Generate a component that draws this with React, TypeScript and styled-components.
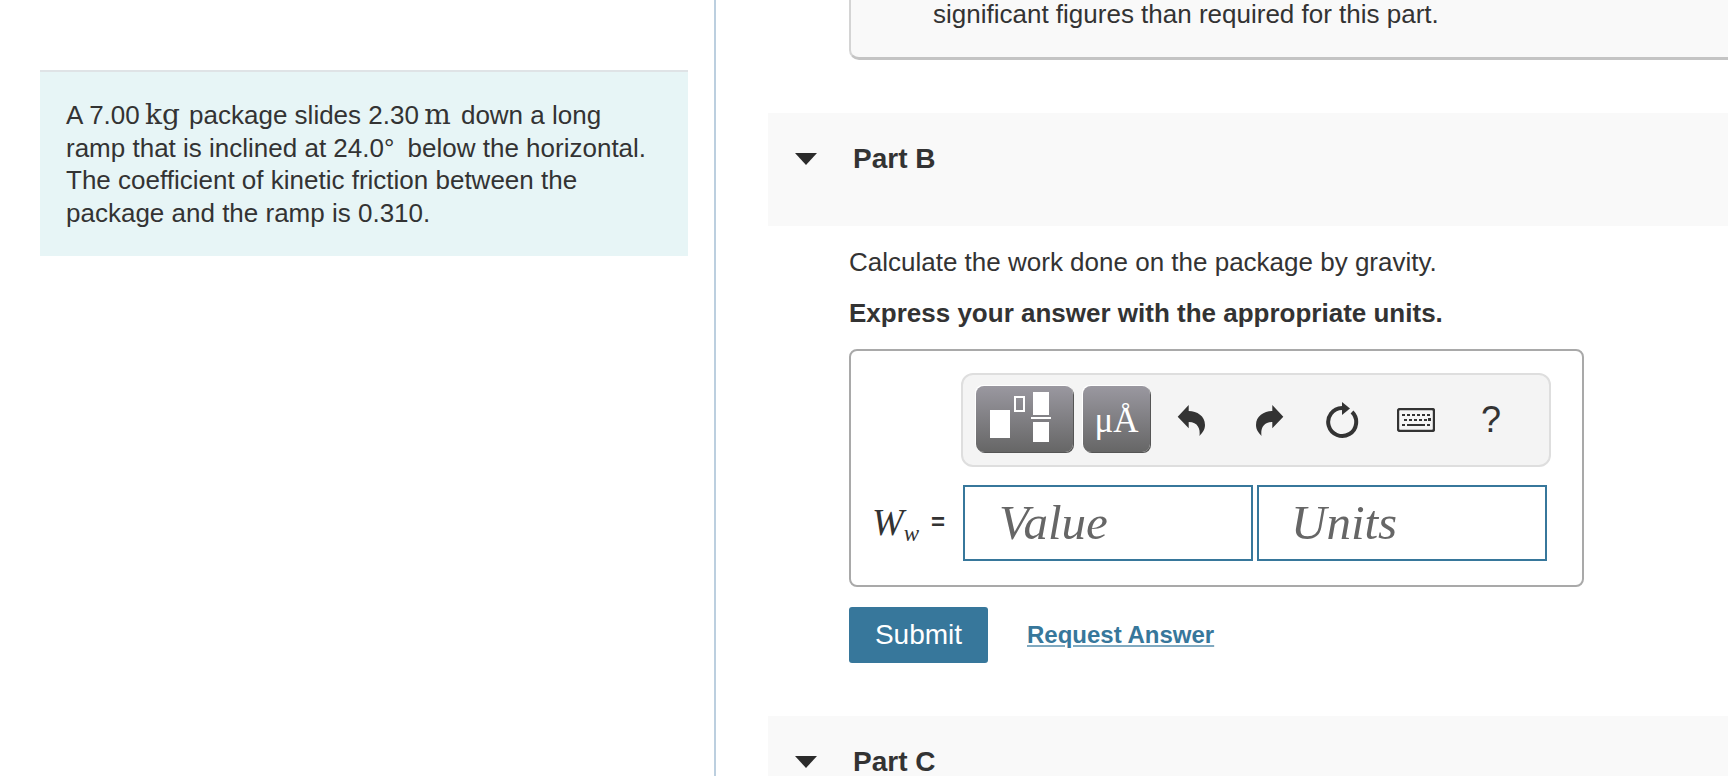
import styled, { createGlobalStyle } from 'styled-components';

const GlobalStyle = createGlobalStyle`
	html, body {
		margin: 0;
		padding: 0;
		background: #fff;
		overflow: hidden;
	}
	body {
		font-family: "Liberation Sans", Arial, sans-serif;
		color: #333;
	}
`;

const UndoIcon = ({ flip }: { flip?: boolean }) => (
	<ArrowSvg viewBox="0 0 28 31" $flip={flip}>
		<path d="M0.7 11.7 L11.7 0 V6 C20 6 28 11 28 20 C28 25 25 28 22.5 31 C23.5 24 21 17 11.7 17 V23.3 Z" fill="#333" />
	</ArrowSvg>
);

const RefreshIcon = () => (
	<svg width="36" height="38" viewBox="0 0 36 38">
		<path d="M18 7 A14 14 0 1 0 28 11" fill="none" stroke="#333" strokeWidth="4" />
		<polygon points="18,1 18,14 26,7.5" fill="#333" />
	</svg>
);

const KeyboardIcon = () => (
	<svg width="38" height="24" viewBox="0 0 38 24">
		<rect x="1" y="1" width="36" height="22" rx="2" fill="#f4f4f4" stroke="#333" strokeWidth="2.4" />
		{[5, 10, 15, 20, 25, 30].map((x) => (
			<rect key={x} x={x} y="6" width="3" height="2" fill="#333" />
		))}
		{[7, 12, 17, 22, 27].map((x) => (
			<rect key={x} x={x} y="11" width="3" height="2" fill="#333" />
		))}
		<rect x="31" y="10" width="3" height="3" fill="#333" />
		<rect x="5" y="16" width="3" height="2" fill="#333" />
		<rect x="10" y="16" width="18" height="2" fill="#333" />
		<rect x="30" y="16" width="3" height="2" fill="#333" />
	</svg>
);

const TemplatesIcon = () => (
	<svg width="97" height="66" viewBox="0 0 97 66">
		<rect x="14" y="24" width="20" height="28" fill="#fff" />
		<rect x="39" y="11" width="9" height="14" fill="none" stroke="#fff" strokeWidth="2" />
		<rect x="57" y="6" width="16" height="23" fill="#fff" />
		<rect x="55" y="31" width="20" height="2" fill="#fff" />
		<rect x="57" y="36" width="16" height="20" fill="#fff" />
	</svg>
);

const App = () => {
	return (
		<Page>
			<GlobalStyle />
			<LeftPane>
				<Intro>
					A 7.00 <MathUnit $after={2}>kg</MathUnit> package slides 2.30 <MathUnit $after={3}>m</MathUnit> down a long ramp
					that is inclined at 24.0<Degree>°</Degree> below the horizontal. The coefficient of kinetic friction between
					the package and the ramp is 0.310.
				</Intro>
			</LeftPane>
			<RightPane>
				<NoticeCard>significant figures than required for this part.</NoticeCard>

				<PartHeader>
					<Caret />
					<PartTitle>Part B</PartTitle>
				</PartHeader>

				<PartBody>
					<Prompt>Calculate the work done on the package by gravity.</Prompt>
					<Instruction>Express your answer with the appropriate units.</Instruction>

					<AnswerBox>
						<Toolbar>
							<DarkButton>
								<TemplatesIcon />
							</DarkButton>
							<SymbolButton>μÅ</SymbolButton>
							<ToolSlot>
								<UndoIcon />
							</ToolSlot>
							<ToolSlot>
								<UndoIcon flip />
							</ToolSlot>
							<ToolSlot>
								<RefreshIcon />
							</ToolSlot>
							<ToolSlot>
								<KeyboardIcon />
							</ToolSlot>
							<ToolSlot>
								<HelpMark>?</HelpMark>
							</ToolSlot>
						</Toolbar>
						<InputRow>
							<VarLabel>
								<VarName>
									W<VarSub>w</VarSub>
								</VarName>
								<Equals>=</Equals>
							</VarLabel>
							<Field $inset={34}>Value</Field>
							<Field $inset={32}>Units</Field>
						</InputRow>
					</AnswerBox>

					<Actions>
						<SubmitButton>Submit</SubmitButton>
						<RequestLink>Request Answer</RequestLink>
					</Actions>
				</PartBody>

				<PartHeader>
					<Caret />
					<PartTitle>Part C</PartTitle>
				</PartHeader>
			</RightPane>
		</Page>
	);
};

export default App;

const Page = styled.div`
	display: flex;
	width: 1728px;
	height: 776px;
	overflow: hidden;
`;

const LeftPane = styled.div`
	flex: none;
	width: 674px;
	height: 776px;
	padding: 70px 0 0 40px;
	border-right: 2px solid #bccfdf;
`;

const Intro = styled.div`
	width: 648px;
	box-sizing: border-box;
	height: 186px;
	padding: 27px 33px 0 26px;
	background: #e7f5f6;
	border-top: 2px solid #dfe3e6;
	font-size: 26px;
	line-height: 32.6px;
	color: #333;
`;

const MathUnit = styled.span<{ $after: number }>`
	font-family: "DejaVu Serif", "Liberation Serif", serif;
	font-size: 28px;
	line-height: 1;
	margin-left: -2px;
	margin-right: ${(p) => p.$after}px;
`;

const Degree = styled.span`
	padding-right: 6px;
`;

const RightPane = styled.div`
	flex: 1;
	min-width: 0;
	padding-left: 52px;
`;

const NoticeCard = styled.div`
	margin-left: 81px;
	margin-right: -20px;
	height: 60px;
	box-sizing: border-box;
	padding-left: 82px;
	background: #f9f9f9;
	border: 2px solid #d4d4d4;
	border-top: none;
	border-bottom: 3px solid #c4c4c4;
	border-radius: 0 0 10px 10px;
	font-size: 26px;
	line-height: 28px;
	color: #333;
`;

const PartHeader = styled.div`
	display: flex;
	align-items: center;
	height: 113px;
	margin-top: 53px;
	background: #f9f9f9;
	padding: 0 0 22px 27px;
	box-sizing: border-box;
`;

const Caret = styled.span`
	width: 0;
	height: 0;
	border-left: 11px solid transparent;
	border-right: 11px solid transparent;
	border-top: 12px solid #2b2b2b;
	margin-right: 36px;
`;

const PartTitle = styled.span`
	font-size: 28px;
	font-weight: bold;
	color: #333;
`;

const PartBody = styled.div`
	padding-left: 81px;
	height: 437px;
`;

const Prompt = styled.div`
	padding-top: 21px;
	font-size: 26px;
	line-height: 30px;
	color: #333;
`;

const Instruction = styled.div`
	margin-top: 21px;
	font-size: 26px;
	font-weight: bold;
	line-height: 30px;
	color: #333;
`;

const AnswerBox = styled.div`
	width: 735px;
	height: 238px;
	margin-top: 21px;
	box-sizing: border-box;
	padding: 22px 0 0 110px;
	border: 2px solid #a9a9a9;
	border-radius: 8px;
`;

const Toolbar = styled.div`
	display: grid;
	grid-template-columns: 97px 77px 78px 79px 66px 82px 68px;
	align-items: center;
	width: 590px;
	height: 94px;
	box-sizing: border-box;
	padding-left: 13px;
	background: #f4f4f4;
	border: 2px solid #dedede;
	border-radius: 12px;
`;

const DarkButton = styled.div`
	width: 97px;
	height: 66px;
	align-self: start;
	margin-top: 11px;
	border-radius: 8px;
	background: linear-gradient(#9a98a0, #666);
	box-shadow: -1px -1px 0 #fff, 1px 1px 0 #555;
`;

const SymbolButton = styled(DarkButton)`
	width: 67px;
	margin-left: 10px;
	display: flex;
	align-items: flex-end;
	justify-content: center;
	box-sizing: border-box;
	padding-bottom: 14px;
	font-family: "Liberation Serif", "Times New Roman", serif;
	font-size: 35px;
	line-height: 1;
	color: #fff;
`;

const ToolSlot = styled.div`
	display: flex;
	align-items: center;
	justify-content: center;
	padding-left: 4px;
`;

const ArrowSvg = styled.svg<{ $flip?: boolean }>`
	width: 28px;
	height: 31px;
	transform: ${(p) => (p.$flip ? 'scaleX(-1)' : 'none')};
`;

const HelpMark = styled.span`
	font-size: 36px;
	color: #333;
`;

const InputRow = styled.div`
	display: flex;
	align-items: center;
	gap: 4px;
	margin: 18px 0 0 -100px;
`;

const VarLabel = styled.div`
	display: flex;
	align-items: center;
	justify-content: space-between;
	width: 89px;
	margin-left: 11px;
	margin-right: -2px;
	box-sizing: border-box;
	padding: 0 16px 3px 0;
`;

const VarName = styled.span`
	font-family: "Liberation Serif", serif;
	font-style: italic;
	font-size: 38px;
	color: #333;
`;

const VarSub = styled.sub`
	font-size: 23px;
	vertical-align: -6px;
	line-height: 0;
`;

const Equals = styled.span`
	font-size: 24px;
	font-weight: bold;
	color: #333;
`;

const Field = styled.div<{ $inset: number }>`
	width: 290px;
	height: 76px;
	box-sizing: border-box;
	padding: 0 0 2px ${(p) => p.$inset}px;
	display: flex;
	align-items: center;
	border: 2px solid #37779b;
	font-family: "Liberation Serif", "Times New Roman", serif;
	font-style: italic;
	font-size: 49px;
	color: #666;
`;

const Actions = styled.div`
	display: flex;
	align-items: center;
	gap: 39px;
	margin-top: 20px;
`;

const SubmitButton = styled.div`
	width: 139px;
	height: 56px;
	display: flex;
	align-items: center;
	justify-content: center;
	background: #37779b;
	border-radius: 3px;
	color: #fff;
	font-size: 28px;
`;

const RequestLink = styled.span`
	font-size: 24px;
	font-weight: bold;
	color: #37779b;
	text-decoration: underline;
	text-decoration-color: #7fa9c0;
`;
